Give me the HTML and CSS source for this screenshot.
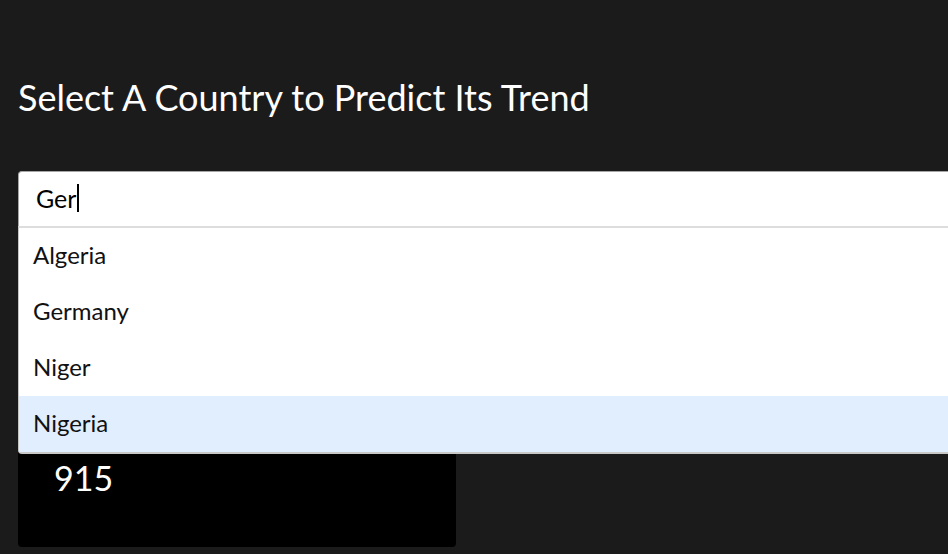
FILE: index.html
```html
<!DOCTYPE html>
<html>
<head>
<meta charset="utf-8">
<link rel="stylesheet" href="styles.css">
</head>
<body>
<main class="page">
  <h1 class="title">Select A Country to Predict Its Trend</h1>
  <div class="select">
    <div class="select-input"><span class="typed">Ger</span><span class="caret"></span></div>
    <ul class="menu">
      <li class="option">Algeria</li>
      <li class="option">Germany</li>
      <li class="option">Niger</li>
      <li class="option active">Nigeria</li>
    </ul>
  </div>
  <section class="card">
    <div class="value">915</div>
  </section>
</main>
</body>
</html>
```

FILE: styles.css
```css
html, body {
  margin: 0;
  padding: 0;
  background: #1b1b1b;
  overflow: hidden;
  width: 948px;
  height: 554px;
}
body {
  font-family: Lato, "Open Sans", sans-serif;
}
.page {
  padding: 77px 0 0 18px;
}
.title {
  margin: 0;
  font-size: 36px;
  line-height: 40px;
  font-weight: 400;
  color: #ffffff;
}
.select {
  position: relative;
  margin-top: 54px;
  width: 1000px;
}
.select-input {
  box-sizing: border-box;
  height: 56px;
  background: #ffffff;
  border: 1px solid #a6a6a6;
  border-bottom: none;
  border-radius: 4px 4px 0 0;
  display: flex;
  align-items: center;
  padding: 0 0 3px 17px;
  font-size: 25px;
  color: #000;
}
.caret {
  display: inline-block;
  width: 2px;
  height: 28px;
  background: #000;
  margin-left: 1px;
}
.menu {
  position: absolute;
  left: 0;
  right: 0;
  top: 55px;
  margin: 0;
  padding: 0;
  list-style: none;
  background: #ffffff;
  border-top: 2px solid #dddddd;
  border-left: 1px solid #c4c4c4;
  border-bottom: 2px solid #c8c8c8;
  border-radius: 0 0 4px 4px;
  z-index: 2;
  overflow: hidden;
}
.option {
  box-sizing: border-box;
  height: 56px;
  display: flex;
  align-items: center;
  padding: 0 0 4px 14px;
  font-size: 24px;
  color: #111;
}
.option.active {
  background: #e1eefd;
}
.card {
  margin-top: 24px;
  width: 438px;
  height: 296px;
  box-sizing: border-box;
  background: #000;
  border-radius: 4px;
  display: flex;
  flex-direction: column;
  justify-content: flex-end;
  padding: 0 0 49px 36px;
}
.value {
  color: #fff;
  font-size: 34px;
  line-height: 40px;
}
```
